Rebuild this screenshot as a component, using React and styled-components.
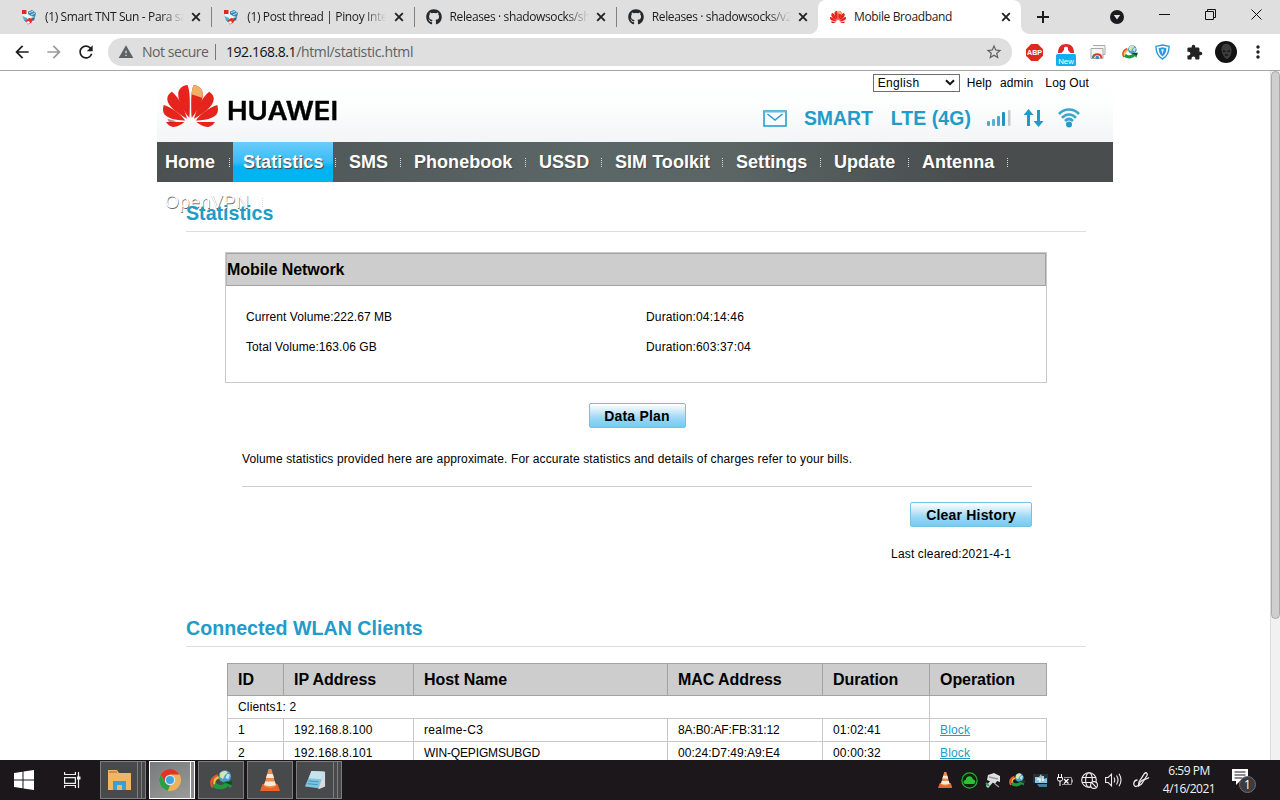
import React from "react";
import styled, { createGlobalStyle, css } from "styled-components";
import { MdArrowBack, MdArrowForward, MdRefresh, MdWarning, MdStarBorder, MdExtension, MdMoreVert } from "react-icons/md";
import { FaGithub } from "react-icons/fa";

const Global = createGlobalStyle`
  * { box-sizing: border-box; }
  html, body { margin: 0; height: 100%; overflow: hidden; background: #fff; }
  #root { height: 100%; }
`;

const Desktop = styled.div`
  display: flex;
  flex-direction: column;
  width: 1280px;
  height: 800px;
  overflow: hidden;
  font: 12px "Liberation Sans", Arial, sans-serif;
  color: #000;
`;

/* ---------- browser chrome ---------- */

const TabStrip = styled.div`
  display: flex;
  flex: none;
  height: 34px;
  padding-left: 9px;
  background: #dfdfdf;
`;

const Tab = styled.div`
  position: relative;
  display: flex;
  align-items: center;
  flex: none;
  width: ${(p) => (p.$active ? 203 : 202.25)}px;
  padding: 0 10px 0 12px;
  background: ${(p) => (p.$active ? "#fff" : "transparent")};
  border-radius: 8px 8px 0 0;
  ${(p) =>
    p.$active &&
    css`
      &::before,
      &::after {
        content: "";
        position: absolute;
        bottom: 0;
        width: 8px;
        height: 8px;
      }
      &::before {
        left: -8px;
        background: radial-gradient(circle at 0 0, transparent 7.5px, #fff 8px);
      }
      &::after {
        right: -8px;
        background: radial-gradient(circle at 100% 0, transparent 7.5px, #fff 8px);
      }
    `}
  ${(p) =>
    p.$divider &&
    css`
      &::after {
        content: "";
        position: absolute;
        right: -1px;
        top: 7px;
        width: 1px;
        height: 20px;
        background: #808080;
      }
    `}
`;

const Favicon = styled.span`
  display: flex;
  flex: none;
  width: 16px;
  height: 16px;
  margin-right: 8px;
`;

const TabTitle = styled.span`
  flex: 1;
  overflow: hidden;
  white-space: nowrap;
  font: 12px/18px "Open Sans", sans-serif;
  letter-spacing: -0.37px;
  color: #1c1c1c;
  margin-right: 6px;
  ${(p) => p.$fade && css`mask-image: linear-gradient(90deg, #000 116px, transparent 139px);`}
`;

const WindowControls = styled.div`
  display: flex;
  margin-left: auto;
  padding: 9px 18px 0 0;
  gap: 35px;
`;

const Toolbar = styled.div`
  display: flex;
  align-items: center;
  flex: none;
  height: 37px;
  padding-left: 12px;
  border-bottom: 1px solid #a5a5a5;
  background: #fff;
`;

const NavIcon = styled.span`
  display: flex;
  flex: none;
  margin-right: 12px;
  font-size: 20px;
  color: ${(p) => (p.$off ? "#9a9a9a" : "#1d1d1d")};
`;

const Omnibox = styled.div`
  display: flex;
  align-items: center;
  flex: none;
  width: 904px;
  height: 28px;
  padding: 0 9px 0 10px;
  border-radius: 14px;
  background: #dfdfdf;
  font: 14px/20px "Open Sans", sans-serif;
  letter-spacing: -0.45px;
  color: #5d6163;
`;

const Security = styled.span`
  padding: 0 7px 0 8px;
  width: 81px;
  white-space: nowrap;
`;

const Address = styled.span`
  flex: 1;
  padding-left: 10px;
  border-left: 1px solid #777;
  line-height: 16px;
  letter-spacing: -0.35px;
  b { font-weight: 400; color: #111; letter-spacing: -0.45px; }
`;

const Extensions = styled.div`
  display: flex;
  align-items: center;
  flex: none;
  padding-left: 6px;
`;

const Ext = styled.span`
  display: flex;
  justify-content: center;
  flex: none;
  width: 32px;
`;

/* ---------- page ---------- */

const Viewport = styled.main`
  display: flex;
  flex: none;
  height: 689px;
  overflow: hidden;
  background: #fff;
`;

const PageBody = styled.div`
  flex: 1;
  padding-left: 157px;
`;

const Scrollbar = styled.div`
  width: 10px;
  background: #f1f1f1;
  border-left: 1px solid #ddd;
`;

const Thumb = styled.div`
  height: 548px;
  border-radius: 5px;
  border: 1px solid #a9a9a9;
  background: #cfcfcf;
`;

const Page = styled.div`
  width: 956px;
`;

const Header = styled.header`
  display: flex;
  justify-content: space-between;
  height: 71px;
  background: linear-gradient(#fff 10%, #fcfdfd 50%, #f3f5f6);
`;

const Brand = styled.div`
  display: flex;
  align-items: flex-start;
  padding: 13px 0 0 6px;
`;

const Wordmark = styled.span`
  margin: 12px 0 0 9px;
  font: 600 25px/30px Inter, sans-serif;
  color: #000;
  -webkit-text-stroke: 0.4px #000;
  transform: scaleX(1.105);
  transform-origin: left;
`;

const HeaderRight = styled.div`
  display: flex;
  flex-direction: column;
`;

const UserLinks = styled.div`
  display: flex;
  align-items: center;
  justify-content: flex-end;
  height: 23px;
  padding-right: 24px;
  letter-spacing: 0.14px;
  white-space: nowrap;
`;

const Language = styled.div`
  display: flex;
  align-items: center;
  justify-content: space-between;
  width: 87px;
  height: 18px;
  margin-right: 7px;
  padding: 0 4px;
  border: 1px solid #6f6f6f;
  background: #fff;
  letter-spacing: 0.35px;
`;

const LinkItem = styled.span`
  margin-left: ${(p) => p.$gap || 0}px;
`;

const Status = styled.div`
  display: flex;
  align-items: center;
  height: 48px;
  padding: 0 33px 0 0;
  font: bold 19.4px "Liberation Sans", Arial, sans-serif;
  color: #219bc8;
  white-space: nowrap;
`;

const StatusText = styled.span`
  margin-left: ${(p) => p.$gap}px;
  letter-spacing: ${(p) => p.$ls || 0}px;
`;

const StatusIcon = styled.span`
  display: flex;
  margin-left: ${(p) => p.$gap || 0}px;
`;

const Nav = styled.nav`
  display: flex;
  flex-wrap: wrap;
  height: 40px;
  background: linear-gradient(90deg, #4b5051, #5b6766 45%, #5a6564 60%, #494d4e 85%);
`;

const NavItem = styled.a`
  display: flex;
  justify-content: space-between;
  align-items: center;
  flex: none;
  width: ${(p) => p.$w}px;
  height: 40px;
  padding-left: ${(p) => p.$pad ?? 13}px;
  font: bold 18px/20px "Liberation Sans", Arial, sans-serif;
  color: #fff;
  text-shadow: ${(p) => (p.$wrapped ? "0.5px 0.5px 0.5px #666" : "1px 1px 1px #444")};
  font-weight: ${(p) => (p.$wrapped ? 400 : 700)};
  letter-spacing: ${(p) => (p.$wrapped ? 0.5 : 0.04)}px;
  background: ${(p) => (p.$active ? "linear-gradient(#6ccbf9, #35bdf8 50%, #00b3f3 62%)" : "none")};

  &::after {
    content: "";
    width: 1px;
    height: 9px;
    margin-right: ${(p) => p.$sep ?? 0}px;
    background: repeating-linear-gradient(#d6dada 0 1px, transparent 1px 2px);
  }
`;

const Title = styled.h1`
  position: relative;
  width: 900px;
  height: ${(p) => p.$h}px;
  margin: 0 0 0 29px;
  padding-top: ${(p) => p.$top}px;
  border-bottom: 1px solid #dedede;
  font: bold 19.65px/22px "Liberation Sans", Arial, sans-serif;
  color: #219bc8;
`;

const Panel = styled.section`
  width: 822px;
  height: 131px;
  margin: 20px 0 0 68px;
  border: 1px solid #c9c9c9;
`;

const PanelHeading = styled.h2`
  height: 33px;
  margin: 0;
  border: 1px solid #a3a3a3;
  border-left-color: #b5b5b5;
  background: #cdcdcd;
  font: bold 16px/31px "Liberation Sans", Arial, sans-serif;
  letter-spacing: -0.06px;
`;

const Stats = styled.div`
  display: grid;
  grid-template-columns: 400px 1fr;
  grid-auto-rows: 30px;
  align-items: center;
  padding: 16px 0 0 20px;
  letter-spacing: 0.06px;
`;

const Wide = styled.span`
  letter-spacing: 0.15px;
`;

const Actions = styled.div`
  width: 790px;
  margin: 20px 0 0 85px;
`;

const Row = styled.div`
  display: flex;
  justify-content: ${(p) => p.$justify};
`;

const Button = styled.button`
  width: ${(p) => p.$w}px;
  height: 25px;
  padding: 0;
  border: 1px solid #72c2e2;
  border-radius: 2px;
  background: linear-gradient(#fff, #c9e8f8 35%, #9bd8f5 60%, #74cbf2);
  font: bold 14px "Liberation Sans", Arial, sans-serif;
  letter-spacing: 0.2px;
  color: #000;
`;

const Note = styled.p`
  height: 35px;
  margin: 24px 0 15px;
  border-bottom: 1px solid #cecece;
  line-height: 14px;
  letter-spacing: 0.125px;
`;

const Cleared = styled.div`
  margin: 20px 21px 0 0;
  text-align: right;
  line-height: 14px;
  letter-spacing: 0.15px;
`;

const Clients = styled.table`
  width: 820px;
  margin: 16px 0 0 70px;
  border-collapse: collapse;
  table-layout: fixed;
`;

const Th = styled.th`
  height: 32px;
  padding: 0 0 0 10px;
  border: 1px solid #a3a3a3;
  background: #cdcdcd;
  text-align: left;
  font: bold 16px "Liberation Sans", Arial, sans-serif;
  letter-spacing: -0.06px;
`;

const Td = styled.td`
  height: 23px;
  padding: 0 0 1px 10px;
  border: 1px solid #c9c9c9;
  border-right-color: ${(p) => (p.$open ? "transparent" : "#c9c9c9")};
  letter-spacing: ${(p) => p.$ls ?? 0.15}px;
`;

const BlockLink = styled.a`
  color: #219bc8;
  text-decoration: underline;
`;

/* ---------- taskbar ---------- */

const Taskbar = styled.footer`
  display: flex;
  align-items: center;
  flex: none;
  height: 40px;
  padding: 0 22px 0 14px;
  background: #1b171a;
`;

const SystemButton = styled.span`
  display: flex;
  margin-right: ${(p) => p.$gap}px;
`;

const Stack = styled.div`
  display: flex;
  margin-right: 3px;
`;

const AppButton = styled.div`
  display: flex;
  align-items: center;
  justify-content: center;
  width: ${(p) => p.$w || 46}px;
  height: 38px;
  border: 1px solid ${(p) => (p.$active ? "#fff" : "#7d7d7e")};
  background: ${(p) => (p.$active ? "linear-gradient(150deg, #777b7b, #9a9a9a)" : "#48494b")};
`;

const StackEdge = styled.div`
  width: 4px;
  height: 38px;
  border: 1px solid ${(p) => (p.$active ? "#fff" : "#7d7d7e")};
  border-left-width: 0;
  background: ${(p) => (p.$active ? "#8a8a8a" : "#48494b")};
`;

const Tray = styled.div`
  display: flex;
  align-items: center;
  margin-left: auto;
`;

const TrayIcon = styled.span`
  display: flex;
  justify-content: center;
  width: ${(p) => p.$w || 24}px;
`;

const Clock = styled.div`
  width: 62px;
  margin-right: 12px;
  font: 12px/18px "Open Sans", sans-serif;
  letter-spacing: -0.5px;
  text-align: center;
  color: #f2f2f2;
`;

/* ---------- drawings ---------- */

const CrossIcon = () => (
  <svg width="10" height="10" viewBox="0 0 10 10"><path d="M1.200 1.200l7.600 7.600M8.800 1.200L1.200 8.800" stroke="#222" strokeWidth="1.900" /></svg>
);

const PlusSvg = styled.svg`
  flex: none;
  margin: 11px 0 0 16px;
`;

const NewTabIcon = () => (
  <PlusSvg width="12" height="12" viewBox="0 0 12 12"><path d="M6 0v12M0 6h12" stroke="#1b1b1b" strokeWidth="2" /></PlusSvg>
);

const ForumIcon = () => (
  <svg width="16" height="16" viewBox="0 0 16 16">
    <path d="M2 3 8 1l6 2v6c0 3-3 5-6 6.500C4 13.500 2 12 2 9z" fill="#eef3f5" />
    <path d="M7 2.500 11 1l4 3-1 4-4-1-3-2z" fill="#3289b5" />
    <path d="M8 3.500l4-1M10 6l4-2" stroke="#bfe4f2" />
    <path d="M1 1h4.500v4H1z" fill="#dc2b22" />
    <path d="M1.500 7l4.500 2 1 4-4-1z" fill="#4bb2da" />
    <path d="M4 12l4-3 5 1-3 4-3 1.500z" fill="#d93529" />
    <path d="M5 13l3-1 1 2-2 1z" fill="#fff" />
    <path d="M10 9l4-1-1 4z" fill="#2d6f99" />
  </svg>
);

const petals = [
  "M26.800 34C21 27 15 18 15.500 9 16 4 20 .8 25 .5c2 5 2.400 12 2.300 20 0 6-.1 10-.5 13.500z",
  "M24.500 35C16 30 5 23 4.300 15 4.200 12 6 9.500 9 7.500 16 13 21.500 24 24.500 35z",
  "M22.500 36.800C14 37 5 35 1.500 30.500-.2 28-.3 24.500.7 21 8.500 23.500 18 30 22.500 36.800z",
  "M22 38.300c-3 2.200-8 5.300-12 5-3-.3-5.500-2.500-6.800-5z",
];

const HuaweiFlower = ({ size = 55, height = 44 }) => (
  <svg width={size} height={height} viewBox="0 0 56 44">
    {[undefined, "translate(56 0) scale(-1 1)"].map((t, i) => (
      <g key={i} transform={t} fill="#e5251d">
        {petals.map((d) => <path key={d} d={d} />)}
      </g>
    ))}
    <path d="M31 .5c5 .3 9 3.500 9.500 8.500 0 1.500-.3 3-.8 4.500L29 10c.2-3.500 1-6.500 2-9.500z" fill="#efb168" />
    <path d="M4.500 35l9 2.500-7 2z" fill="#7d1b17" opacity=".5" />
  </svg>
);

const MinimizeIcon = () => <svg width="11" height="11"><path d="M0 5.500h11" stroke="#111" /></svg>;
const RestoreIcon = () => (
  <svg width="11" height="11" fill="none" stroke="#111"><path d="M.5 2.500h8v8h-8zM2.500 2.500v-2h8v8h-2" /></svg>
);
const CloseIcon = () => <svg width="11" height="11"><path d="M.5.500l10 10M10.500.500l-10 10" stroke="#111" /></svg>;

const SearchSvg = styled.svg`
  margin: 1px 0 0 3px;
`;
const SearchTabs = () => (
  <SearchSvg width="14" height="14" viewBox="0 0 14 14"><circle cx="7" cy="7" r="7" fill="#1b1b1f" /><path d="M3.800 5h6.400L7 9.500z" fill="#e6e6e6" /></SearchSvg>
);

const AdblockIcon = () => (
  <svg width="17" height="17" viewBox="0 0 18 18">
    <path d="M5.500 0h7L18 5.500v7L12.500 18h-7L0 12.500v-7z" fill="#de2920" />
    <text x="9" y="12" textAnchor="middle" fontFamily="Liberation Sans" fontWeight="700" fontSize="7.500" fill="#fff">ABP</text>
  </svg>
);
const BadgeSvg = styled.svg`
  margin-top: 5px;
`;
const NewBadgeIcon = () => (
  <BadgeSvg width="20" height="24" viewBox="0 0 20 24">
    <path d="M2 10C2 4 5 1 10 1s8 3 8 9z" fill="#dd2b24" />
    <path d="M5.500 10l2.500-3V4.500l2-1 2 1V7l2.500 3z" fill="#fff" />
    <rect y="11" width="20" height="12" rx="1.500" fill="#12aff0" />
    <text x="10" y="20.500" textAnchor="middle" fontFamily="Liberation Sans" fontSize="7.800" fill="#fff">New</text>
  </BadgeSvg>
);
const CardsIcon = () => (
  <svg width="16" height="16" viewBox="0 0 16 16">
    <path d="M3 1.500h12v9h-2M1 4.500h12v10H1z" fill="#f5f5f5" stroke="#a8a8a8" />
    <path d="M3 14a4.300 4.300 0 0 1 8.500 0" fill="none" stroke="#df3a2f" strokeWidth="2" />
    <path d="M3 14a4 4 0 0 1 1.300-3" fill="none" stroke="#2c9b4c" strokeWidth="2" />
    <circle cx="7.300" cy="13.500" r="1.800" fill="#3d83c8" />
  </svg>
);
const GlobeArrow = ({ size = 16 }) => (
  <svg width={size} height={size * 0.85} viewBox="0 0 24 20.500">
    <circle cx="15.500" cy="6.800" r="6.500" fill="#4b9fcd" />
    <path d="M10.500 3.500c3-3.500 7-3 8-1l-3 3-2 4-3-2z" fill="#d6e6ae" />
    <path d="M18 4l3 1-2 5-3-2z" fill="#bfe0ee" />
    <path d="M8 5.500C0 9 .5 15 3 18" fill="none" stroke="#e2572e" strokeWidth="2.600" />
    <path d="M9 7.500C3.500 10 3.500 14 6 16.500" fill="none" stroke="#f2c03a" strokeWidth="2.400" />
    <path d="M2.500 17.500C8 21.500 15 21 19 17l3 2 1.500-7.500-10.500 1 2.500 1.500c-3 2.500-7 2-9.500-.5z" fill="#1f9a3f" />
    <path d="M14 12.500l9.500-1-1 4.500z" fill="#0e4d22" />
  </svg>
);
const ShieldIcon = () => (
  <svg width="15" height="16" viewBox="0 0 16 17">
    <path d="M1 2.500 8 1l7 1.500C15 9 13 13 8 16 3 13 1 9 1 2.500z" fill="#fff" stroke="#279bdc" strokeWidth="1.500" />
    <path d="M3.800 4.500 8 3.500l4.200 1C12 8.500 11 11 8 13.300 5 11 4 8.500 3.800 4.500z" fill="#279bdc" />
    <path d="M6.500 5.500h3L8 11z" fill="#d9f0fb" />
  </svg>
);
const Avatar = () => (
  <svg width="22" height="22" viewBox="0 0 22 22">
    <circle cx="11" cy="11" r="11" fill="#131313" />
    <path d="M6.500 8c0-7 9-7 10 0 .5 4.500-1.500 9-4.500 10C9 17 6.500 12 6.500 8z" fill="#3d3d3d" />
    <path d="M8 10l2.500.500M12.500 10.500 15 10M10 14h3" stroke="#151515" strokeWidth="1.300" />
  </svg>
);

const ChevronIcon = () => <svg width="10" height="7" fill="none" stroke="#111" strokeWidth="2"><path d="M1 1.200l4 4 4-4" /></svg>;
const Envelope = () => (
  <svg width="24" height="17" viewBox="0 0 24 17">
    <rect x="1" y="1" width="22" height="15" fill="#f8fcfe" stroke="#2a9ecb" strokeWidth="1.600" />
    <path d="M1 1.500h22" stroke="#69b9da" strokeWidth="2" />
    <path d="M4.500 4l7.500 6 7.500-6" fill="none" stroke="#2a9ecb" strokeWidth="1.600" />
  </svg>
);
const bars = [
  [1, 12, "#4ba9cf", 3],
  [6, 10, "#5fb0d2", 3],
  [11, 7, "#4ea6cc", 3],
  [16, 3, "#258fbd", 3],
  [22, 1, "#c5c9cb", 2.5],
];
const SignalIcon = () => (
  <svg width="25" height="18">
    {bars.map(([x, y, fill, w]) => <rect key={x} x={x} y={y} width={w} height={17 - y} rx="1" fill={fill} />)}
  </svg>
);
const ArrowsIcon = () => (
  <svg width="20" height="18" fill="#2299c8">
    <path d="M4.500 0l5 6H6v11H3V6H-.5zM14.500 18l-5-6H13V1h3v11h3.500z" />
  </svg>
);
const WifiIcon = () => (
  <svg width="22" height="20" fill="none" stroke="#3aa5cf" strokeWidth="2.600">
    <path d="M1 6C6.500 0 15.500 0 21 6M4 9.800c4-4.500 10-4.500 14 0M7 13c2.500-2.500 5.500-2.500 8 0" />
    <circle cx="11" cy="16.500" r="3" fill="#2299c8" stroke="none" />
  </svg>
);

const WindowsIcon = () => (
  <svg width="20" height="20" fill="#fff"><path d="M0 3l8.500-1.200v7.700H0zM9.500 1.600 20 0v9.500H9.500zM0 10.500h8.500v7.700L0 17zM9.500 10.500H20V20L9.500 18.400z" /></svg>
);
const TaskViewIcon = () => (
  <svg width="17" height="16" fill="none" stroke="#eee" strokeWidth="1.200">
    <path d="M.6 0v2.500h10.800V0M.6 5.600h10.800v5.800H.600zM.6 16v-2.500h10.800V16M14.500 0v16" />
    <path d="M13 4.500h3.500v3H13z" fill="#eee" stroke="none" />
  </svg>
);
const FolderIcon = () => (
  <svg width="23" height="20" viewBox="0 0 23 20">
    <path d="M0 0h9l2 3h12v17H0z" fill="#efb765" />
    <path d="M1 1h8v2H1z" fill="#e18545" />
    <path d="M5 20v-9h13v9h-4v-5H9v5z" fill="#3a9fd4" />
  </svg>
);
const ChromeIcon = () => (
  <svg width="22" height="22" viewBox="0 0 22 22">
    <circle cx="11" cy="11" r="11" fill="#efb25b" />
    <path d="M1.500 5.500A11 11 0 0 1 20.500 5.500H11L6.200 13.700z" fill="#e03426" />
    <path d="M1.500 5.500 6.300 13.700 11 16.500 8.800 21.800A11 11 0 0 1 1.500 5.500z" fill="#2e9d4b" />
    <circle cx="11" cy="11" r="5.200" fill="#dfeaf0" />
    <circle cx="11" cy="11" r="4" fill="#41a4dc" />
  </svg>
);
const ConeIcon = ({ size = 22 }) => (
  <svg width={size * 0.91} height={size} viewBox="0 0 20 22">
    <path d="M2.500 15h15l2.500 7H0z" fill="#e8642e" />
    <path d="M8.500 0h3l4.500 17c-3 2.500-9 2.500-12 0z" fill="#ee8a4b" />
    <path d="M7.200 5h5.600l1.200 4H6zM5.100 12.500h9.800l1 3.500c-3 1.500-9 1.500-11.800 0z" fill="#f7ebe0" />
  </svg>
);
const NotebookIcon = () => (
  <svg width="21" height="21" viewBox="0 0 23 21">
    <path d="M7 0l15 1v16l-7 3z" fill="#d5dcde" />
    <path d="M7 0l14 1-6 18L0 17z" fill="#83c4df" />
    <path d="M7 0l14 1-3 8L4 8z" fill="#c6e2ed" />
    <path d="M3 14l11 1M4 11l11 1" stroke="#398fb8" />
  </svg>
);
const CloudIcon = () => (
  <svg width="17" height="17" viewBox="0 0 17 17">
    <circle cx="8.500" cy="8.500" r="7.600" fill="#0f2110" stroke="#24b52e" strokeWidth="1.200" />
    <path d="M4 12c-2.500-1-1.500-4 .700-4C5 3.500 11 3 12 7.500c3 .3 3 4 .5 4.500z" fill="#2cc136" />
  </svg>
);
const ToolIcon = () => (
  <svg width="16" height="15" viewBox="0 0 16 15">
    <path d="M3 2l6-2 6 3v6l-3-1-2 3-3-2-5-2z" fill="#e0e0e0" />
    <path d="M8 7 2 14" stroke="#d8dede" strokeWidth="3" />
    <path d="M1 10l3 3" stroke="#36a252" strokeWidth="2" />
    <path d="M4 4l9 2M10 11l4 3" stroke="#999" strokeWidth="1.500" />
  </svg>
);
const MonitorIcon = () => (
  <svg width="16" height="15" viewBox="0 0 16 15">
    <path d="M0 1h15v9H0z" fill="#26333c" />
    <path d="M2 10V4h4l2-3 2 5 4-1v5z" fill="#8fc3df" />
    <path d="M4 11h10v3H6z" fill="#467ca0" />
    <path d="M4 6h3v3M10 3v5" stroke="#f0f6f8" strokeWidth="1.500" fill="none" />
  </svg>
);
const BatteryIcon = () => (
  <svg width="16" height="12" fill="none" stroke="#ccc">
    <path d="M1.500 0v3M4.500 0v3M.5 3.500h5v2l-1 1.500h-3l-1-1.500zM3 7v5" stroke="#fff" />
    <path d="M7 3.500h7.500v7H5M15.500 5.500v3" stroke="#999" />
    <path d="M7 5l4.500 4.500M11.500 5 7 9.500" strokeWidth="1.300" stroke="#fff" />
  </svg>
);
const NetworkIcon = () => (
  <svg width="17" height="17" fill="none" stroke="#eee" strokeWidth="1.100">
    <circle cx="8" cy="8" r="7.300" /><ellipse cx="8" cy="8" rx="3.400" ry="7.300" /><path d="M1 5.500h14M1 10.500h10" />
    <circle cx="13" cy="13" r="3.400" fill="#1b171a" /><path d="M10.700 10.700l4.600 4.600" />
  </svg>
);
const VolumeIcon = () => (
  <svg width="17" height="14" fill="none" stroke="#eee" strokeWidth="1.100">
    <path d="M.6 4.500h2.600L6.500 1.200v11.600L3.200 9.500H.600zM9 4.500q1.500 2.500 0 5M11.500 2.500q3 4.500 0 9M14 .800q4 6.200 0 12.400" />
  </svg>
);
const PenIcon = () => (
  <svg width="17" height="16" fill="none" stroke="#eee" strokeWidth="1.300">
    <path d="M4.500 8C0 8-.3 14.500 3 14.500c3.500 0 2.500-4 6-6 2.500-1.400 4.500-1 7-3" />
    <path d="M5.500 14 6 10 11.500 1.500q1.500-1.500 2.500 0 .5 1 0 2L8.500 12z" />
  </svg>
);
const NotificationIcon = () => (
  <svg width="26" height="26" viewBox="0 0 26 26">
    <path d="M0 2h16v12H8l-4 4v-4H0z" fill="#fff" />
    <path d="M2.500 5h11M2.500 8h11M2.500 11h8" stroke="#1b171a" strokeWidth="1.200" />
    <circle cx="15.500" cy="17.500" r="8" fill="#3c3c3f" stroke="#6f6f72" />
    <text x="15.500" y="22" textAnchor="middle" fontFamily="Open Sans" fontSize="12" fill="#fff">1</text>
  </svg>
);

/* ---------- data ---------- */

const tabs = [
  { title: "(1) Smart TNT Sun - Para sa", icon: <ForumIcon /> },
  { title: "(1) Post thread | Pinoy Intern", icon: <ForumIcon /> },
  { title: "Releases · shadowsocks/sha", icon: <FaGithub size={16} color="#24292e" /> },
  { title: "Releases · shadowsocks/v2r", icon: <FaGithub size={16} color="#24292e" /> },
];

const menu = [
  { label: "Home", w: 76, pad: 8, sep: 3 },
  { label: "Statistics", w: 100, pad: 10, active: true, sep: -3 },
  { label: "SMS", w: 68, pad: 16 },
  { label: "Phonebook", w: 125 },
  { label: "USSD", w: 76 },
  { label: "SIM Toolkit", w: 121 },
  { label: "Settings", w: 98 },
  { label: "Update", w: 88 },
  { label: "Antenna", w: 99 },
  { label: "OpenVPN", w: 106, pad: 8, wrapped: true },
];

const clients = [
  ["1", "192.168.8.100", "realme-C3", "8A:B0:AF:FB:31:12", "01:02:41"],
  ["2", "192.168.8.101", "WIN-QEPIGMSUBGD", "00:24:D7:49:A9:E4", "00:00:32"],
];

const spacing = {
  "realme-C3": 0.35,
  "WIN-QEPIGMSUBGD": -0.14,
  "8A:B0:AF:FB:31:12": -0.1,
  "00:24:D7:49:A9:E4": 0.03,
};

const columns = [
  ["ID", 56],
  ["IP Address", 130],
  ["Host Name", 254],
  ["MAC Address", 155],
  ["Duration", 107],
  ["Operation", 117],
];

const BrowserTabs = () => (
  <TabStrip>
    {tabs.map((t, i) => (
      <Tab key={t.title} $divider={i < 3}>
        <Favicon>{t.icon}</Favicon>
        <TabTitle $fade>{t.title}</TabTitle>
        <CrossIcon />
      </Tab>
    ))}
    <Tab $active>
      <Favicon><HuaweiFlower size={16} height={16} /></Favicon>
      <TabTitle>Mobile Broadband</TabTitle>
      <CrossIcon />
    </Tab>
    <NewTabIcon />
    <WindowControls>
      <SearchTabs />
      <MinimizeIcon />
      <RestoreIcon />
      <CloseIcon />
    </WindowControls>
  </TabStrip>
);

const BrowserToolbar = () => (
  <Toolbar>
    <NavIcon><MdArrowBack /></NavIcon>
    <NavIcon $off><MdArrowForward /></NavIcon>
    <NavIcon><MdRefresh /></NavIcon>
    <Omnibox>
      <MdWarning size={16} />
      <Security>Not secure</Security>
      <Address><b>192.168.8.1</b>/html/statistic.html</Address>
      <MdStarBorder size={18} />
    </Omnibox>
    <Extensions>
      <Ext><AdblockIcon /></Ext>
      <Ext><NewBadgeIcon /></Ext>
      <Ext><CardsIcon /></Ext>
      <Ext><GlobeArrow /></Ext>
      <Ext><ShieldIcon /></Ext>
      <Ext><MdExtension size={17} color="#222" /></Ext>
      <Ext><Avatar /></Ext>
      <Ext><MdMoreVert size={20} color="#222" /></Ext>
    </Extensions>
  </Toolbar>
);

const SiteHeader = () => (
  <Header>
    <Brand>
      <HuaweiFlower />
      <Wordmark>HUAWEI</Wordmark>
    </Brand>
    <HeaderRight>
      <UserLinks>
        <Language>English<ChevronIcon /></Language>
        <LinkItem>Help</LinkItem>
        <LinkItem $gap={8}>admin</LinkItem>
        <LinkItem $gap={12}>Log Out</LinkItem>
      </UserLinks>
      <Status>
        <StatusIcon><Envelope /></StatusIcon>
        <StatusText $gap={17}>SMART</StatusText>
        <StatusText $gap={18} $ls={0.1}>LTE (4G)</StatusText>
        <StatusIcon $gap={15}><SignalIcon /></StatusIcon>
        <StatusIcon $gap={13}><ArrowsIcon /></StatusIcon>
        <StatusIcon $gap={14}><WifiIcon /></StatusIcon>
      </Status>
    </HeaderRight>
  </Header>
);

const ClientTable = () => (
  <Clients>
    <colgroup>{columns.map(([name, w]) => <col key={name} width={w} />)}</colgroup>
    <thead>
      <tr>{columns.map(([name]) => <Th key={name}>{name}</Th>)}</tr>
    </thead>
    <tbody>
      <tr><Td colSpan={5}>Clients1: 2</Td><Td $open /></tr>
      {clients.map((row) => (
        <tr key={row[0]}>
          {row.map((cell) => <Td key={cell} $ls={spacing[cell]}>{cell}</Td>)}
          <Td><BlockLink>Block</BlockLink></Td>
        </tr>
      ))}
    </tbody>
  </Clients>
);

export default function App() {
  return (
    <Desktop>
      <Global />
      <BrowserTabs />
      <BrowserToolbar />
      <Viewport>
        <PageBody>
          <Page>
            <SiteHeader />
            <Nav>
              {menu.map((m) => (
                <NavItem key={m.label} $w={m.w} $pad={m.pad} $sep={m.sep} $active={m.active} $wrapped={m.wrapped}>{m.label}</NavItem>
              ))}
            </Nav>
            <Title $h={50} $top={20}>Statistics</Title>
            <Panel>
              <PanelHeading>Mobile Network</PanelHeading>
              <Stats>
                <span>Current Volume:222.67 MB</span>
                <Wide>Duration:04:14:46</Wide>
                <span>Total Volume:163.06 GB</span>
                <Wide>Duration:603:37:04</Wide>
              </Stats>
            </Panel>
            <Actions>
              <Row $justify="center"><Button $w={97}>Data Plan</Button></Row>
              <Note>Volume statistics provided here are approximate. For accurate statistics and details of charges refer to your bills.</Note>
              <Row $justify="flex-end"><Button $w={122}>Clear History</Button></Row>
              <Cleared>Last cleared:2021-4-1</Cleared>
            </Actions>
            <Title $h={86} $top={56}>Connected WLAN Clients</Title>
            <ClientTable />
          </Page>
        </PageBody>
        <Scrollbar><Thumb /></Scrollbar>
      </Viewport>
      <Taskbar>
        <SystemButton $gap={30}><WindowsIcon /></SystemButton>
        <SystemButton $gap={19}><TaskViewIcon /></SystemButton>
        <Stack><AppButton $w={38}><FolderIcon /></AppButton><StackEdge /><StackEdge /></Stack>
        <Stack><AppButton $w={42} $active><ChromeIcon /></AppButton><StackEdge $active /></Stack>
        <Stack><AppButton><GlobeArrow size={23} /></AppButton></Stack>
        <Stack><AppButton><ConeIcon /></AppButton></Stack>
        <Stack><AppButton $w={38}><NotebookIcon /></AppButton><StackEdge /><StackEdge /></Stack>
        <Tray>
          <TrayIcon><ConeIcon size={16} /></TrayIcon>
          <TrayIcon><CloudIcon /></TrayIcon>
          <TrayIcon><ToolIcon /></TrayIcon>
          <TrayIcon><GlobeArrow size={16} /></TrayIcon>
          <TrayIcon><MonitorIcon /></TrayIcon>
          <TrayIcon><BatteryIcon /></TrayIcon>
          <TrayIcon><NetworkIcon /></TrayIcon>
          <TrayIcon><VolumeIcon /></TrayIcon>
          <TrayIcon $w={33}><PenIcon /></TrayIcon>
          <Clock>6:59 PM<br />4/16/2021</Clock>
          <NotificationIcon />
        </Tray>
      </Taskbar>
    </Desktop>
  );
}
